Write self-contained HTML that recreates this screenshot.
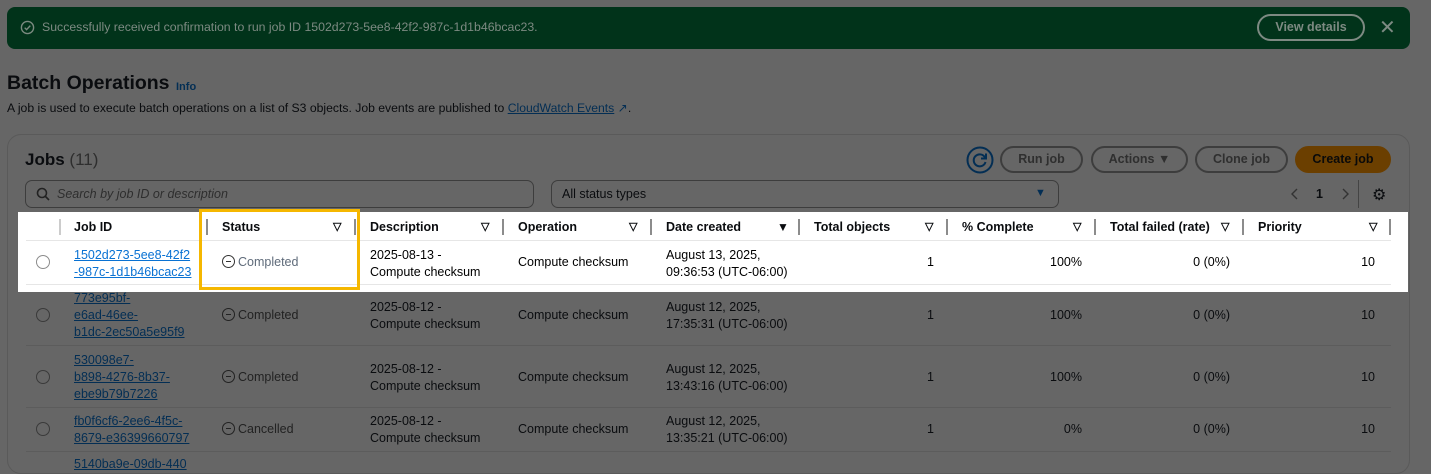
<!DOCTYPE html>
<html><head><meta charset="utf-8"><style>
*{box-sizing:border-box;margin:0;padding:0}
body{width:1431px;height:464px;overflow:hidden;background:#666;font-family:"Liberation Sans",sans-serif;font-size:12.5px;color:#0a0c0f;position:relative}
.a{position:absolute;white-space:nowrap}
.r{position:absolute;white-space:nowrap;text-align:right;width:100px}
.banner{left:7px;top:7px;width:1403px;height:42px;background:#01331a;border-radius:8px}
.btn{position:absolute;height:27px;border:2px solid #3d3d3d;border-radius:14px;color:#2f2f2f;font-weight:bold;font-size:12.5px;text-align:center;line-height:23px}
.panel{left:7px;top:134px;width:1403px;height:340px;border:1px solid #5a5a5a;border-radius:14px}
.lnk{color:#032e54;text-decoration:underline}
.hdr{font-weight:bold}
.sep{position:absolute;width:2px;height:16px;background:#3a3a3a}
.w .sep{background:#8c8c8c}
.rad{position:absolute;width:14px;height:14px;border:1.5px solid #3a3a3a;border-radius:50%}
.line{position:absolute;left:26px;width:1365px;height:1px;background:#5c5c5c}
.tri{font-size:11px;font-weight:bold}
.st{display:inline-block;width:13px;height:13px;border:1.5px solid currentColor;border-radius:50%;vertical-align:-2px;position:relative;margin-right:3px}
.st:after{content:"";position:absolute;left:2.5px;top:4.5px;width:5px;height:1.5px;background:currentColor}
</style></head><body>
<div class="a banner"></div>
<svg class="a" style="left:20px;top:20px" width="15" height="15" viewBox="0 0 16 16"><circle cx="8" cy="8" r="6.5" fill="none" stroke="#7b8a80" stroke-width="1.5"/><path d="M5 8.2l2 2 4-4.2" fill="none" stroke="#7b8a80" stroke-width="1.5"/></svg>
<div class="a" style="left:42px;top:20px;color:#7d8a82;font-size:12.3px">Successfully received confirmation to run job ID 1502d273-5ee8-42f2-987c-1d1b46bcac23.</div>
<div class="btn" style="left:1257px;top:14px;width:108px;border-color:#7d8a82;color:#7d8a82">View details</div>
<div class="a" style="left:1379px;top:15px;color:#7d8a82;font-size:20px">✕</div>

<div class="a" style="left:7px;top:72px;font-size:19.5px;font-weight:bold">Batch Operations</div>
<div class="a" style="left:176px;top:81px;font-size:11px;font-weight:bold;color:#032e54">Info</div>
<div class="a" style="left:7px;top:101px;font-size:12.2px">A job is used to execute batch operations on a list of S3 objects. Job events are published to <span class="lnk">CloudWatch Events</span> <span style="color:#032e54">↗</span>.</div>

<div class="a panel"></div>
<div class="a" style="left:25px;top:150px;font-size:17px"><b>Jobs</b> <span style="color:#2e2e2e">(11)</span></div>
<svg class="a" style="left:966px;top:146px" width="28" height="28" viewBox="0 0 28 28"><circle cx="14" cy="14" r="12.5" fill="none" stroke="#032e54" stroke-width="2"/><path d="M19 11.5A6 6 0 1 0 19.5 16" fill="none" stroke="#032e54" stroke-width="2"/><path d="M20 7.5v5h-5" fill="none" stroke="#032e54" stroke-width="2"/></svg>
<div class="btn" style="left:1000px;top:146px;width:83px">Run job</div>
<div class="btn" style="left:1091px;top:146px;width:97px">Actions ▼</div>
<div class="btn" style="left:1195px;top:146px;width:93px">Clone job</div>
<div class="btn" style="left:1295px;top:146px;width:96px;background:#6b3f00;border-color:#6b3f00;color:#0a0a0a">Create job</div>

<div class="a" style="left:25px;top:180px;width:509px;height:28px;border:1px solid #3d3d3d;border-radius:7px"></div>
<svg class="a" style="left:36px;top:187px" width="14" height="14" viewBox="0 0 14 14"><circle cx="6" cy="6" r="4.5" fill="none" stroke="#222" stroke-width="1.6"/><path d="M9.5 9.5l3.5 3.5" stroke="#222" stroke-width="1.6"/></svg>
<div class="a" style="left:57px;top:187px;font-style:italic;color:#2e2e2e">Search by job ID or description</div>
<div class="a" style="left:551px;top:180px;width:508px;height:28px;border:1px solid #3d3d3d;border-radius:7px"></div>
<div class="a" style="left:562px;top:187px">All status types</div>
<div class="a" style="left:1035px;top:187px;color:#032e54;font-size:11px">▼</div>
<svg class="a" style="left:1290px;top:187px" width="10" height="14" viewBox="0 0 10 14"><path d="M7 2L2 7l5 5" fill="none" stroke="#333" stroke-width="1.4"/></svg>
<div class="a" style="left:1316px;top:187px;font-weight:bold">1</div>
<svg class="a" style="left:1340px;top:187px" width="10" height="14" viewBox="0 0 10 14"><path d="M3 2l5 5-5 5" fill="none" stroke="#333" stroke-width="1.4"/></svg>
<div class="a" style="left:1358px;top:180px;width:1px;height:28px;background:#444"></div>
<div class="a" style="left:1372px;top:185px;font-size:16px">⚙</div>

<div class="a w" style="left:18px;top:212px;width:1390px;height:80px;background:#fff"></div>
<div class="a" style="left:26px;top:240px;width:1365px;height:1px;background:#e6e6e6"></div>
<div class="a" style="left:26px;top:284px;width:1365px;height:1px;background:#e6e6e6"></div>
<div class="line" style="top:345px"></div>
<div class="line" style="top:407px"></div>
<div class="line" style="top:451px"></div>

<div class="w">
<div class="sep" style="left:59px;top:219px;background:#ccc"></div>
<div class="sep" style="left:206px;top:219px"></div>
<div class="sep" style="left:354px;top:219px"></div>
<div class="sep" style="left:502px;top:219px"></div>
<div class="sep" style="left:650px;top:219px"></div>
<div class="sep" style="left:798px;top:219px"></div>
<div class="sep" style="left:946px;top:219px"></div>
<div class="sep" style="left:1094px;top:219px"></div>
<div class="sep" style="left:1242px;top:219px"></div>
<div class="sep" style="left:1389px;top:219px"></div>
</div>
<div class="a hdr" style="left:74px;top:220px">Job ID</div>
<div class="a hdr" style="left:222px;top:220px">Status</div><div class="a tri" style="left:333px;top:220px">▽</div>
<div class="a hdr" style="left:370px;top:220px">Description</div><div class="a tri" style="left:481px;top:220px">▽</div>
<div class="a hdr" style="left:518px;top:220px">Operation</div><div class="a tri" style="left:629px;top:220px">▽</div>
<div class="a hdr" style="left:666px;top:220px">Date created</div><div class="a tri" style="left:777px;top:220px;font-size:12px">▼</div>
<div class="a hdr" style="left:814px;top:220px">Total objects</div><div class="a tri" style="left:925px;top:220px">▽</div>
<div class="a hdr" style="left:962px;top:220px">% Complete</div><div class="a tri" style="left:1073px;top:220px">▽</div>
<div class="a hdr" style="left:1110px;top:220px">Total failed (rate)</div><div class="a tri" style="left:1221px;top:220px">▽</div>
<div class="a hdr" style="left:1258px;top:220px">Priority</div><div class="a tri" style="left:1369px;top:220px">▽</div>

<!-- row 1 -->
<div class="rad" style="left:36px;top:255px;border-color:#8c8c8c"></div>
<div class="a" style="left:74px;top:247px;line-height:17px;color:#0972d3;text-decoration:underline">1502d273-5ee8-42f2<br>-987c-1d1b46bcac23</div>
<div class="a" style="left:222px;top:255px;color:#5f6b7a"><span class="st" style="color:#333"></span>Completed</div>
<div class="a" style="left:370px;top:247px;line-height:17px;color:#000">2025-08-13 -<br>Compute checksum</div>
<div class="a" style="left:518px;top:255px;color:#000">Compute checksum</div>
<div class="a" style="left:666px;top:247px;line-height:17px;color:#000">August 13, 2025,<br>09:36:53 (UTC-06:00)</div>
<div class="r" style="left:834px;top:255px;color:#000">1</div>
<div class="r" style="left:982px;top:255px;color:#000">100%</div>
<div class="r" style="left:1130px;top:255px;color:#000">0 (0%)</div>
<div class="r" style="left:1275px;top:255px;color:#000">10</div>

<div class="a" style="left:199px;top:209px;width:161px;height:81px;border:3px solid #f5b700"></div>

<!-- row 2 -->
<div class="rad" style="left:36px;top:308px"></div>
<div class="a lnk" style="left:74px;top:290px;line-height:17px">773e95bf-<br>e6ad-46ee-<br>b1dc-2ec50a5e95f9</div>
<div class="a" style="left:222px;top:308px;color:#222"><span class="st"></span>Completed</div>
<div class="a" style="left:370px;top:299px;line-height:17px">2025-08-12 -<br>Compute checksum</div>
<div class="a" style="left:518px;top:308px">Compute checksum</div>
<div class="a" style="left:666px;top:299px;line-height:17px">August 12, 2025,<br>17:35:31 (UTC-06:00)</div>
<div class="r" style="left:834px;top:308px">1</div><div class="r" style="left:982px;top:308px">100%</div><div class="r" style="left:1130px;top:308px">0 (0%)</div><div class="r" style="left:1275px;top:308px">10</div>

<!-- row 3 -->
<div class="rad" style="left:36px;top:370px"></div>
<div class="a lnk" style="left:74px;top:352px;line-height:17px">530098e7-<br>b898-4276-8b37-<br>ebe9b79b7226</div>
<div class="a" style="left:222px;top:370px;color:#222"><span class="st"></span>Completed</div>
<div class="a" style="left:370px;top:361px;line-height:17px">2025-08-12 -<br>Compute checksum</div>
<div class="a" style="left:518px;top:370px">Compute checksum</div>
<div class="a" style="left:666px;top:361px;line-height:17px">August 12, 2025,<br>13:43:16 (UTC-06:00)</div>
<div class="r" style="left:834px;top:370px">1</div><div class="r" style="left:982px;top:370px">100%</div><div class="r" style="left:1130px;top:370px">0 (0%)</div><div class="r" style="left:1275px;top:370px">10</div>

<!-- row 4 -->
<div class="rad" style="left:36px;top:422px"></div>
<div class="a lnk" style="left:74px;top:413px;line-height:17px">fb0f6cf6-2ee6-4f5c-<br>8679-e36399660797</div>
<div class="a" style="left:222px;top:422px;color:#222"><span class="st"></span>Cancelled</div>
<div class="a" style="left:370px;top:413px;line-height:17px">2025-08-12 -<br>Compute checksum</div>
<div class="a" style="left:518px;top:422px">Compute checksum</div>
<div class="a" style="left:666px;top:413px;line-height:17px">August 12, 2025,<br>13:35:21 (UTC-06:00)</div>
<div class="r" style="left:834px;top:422px">1</div><div class="r" style="left:982px;top:422px">0%</div><div class="r" style="left:1130px;top:422px">0 (0%)</div><div class="r" style="left:1275px;top:422px">10</div>

<div class="a lnk" style="left:74px;top:457px">5140ba9e-09db-440</div>
</body></html>
